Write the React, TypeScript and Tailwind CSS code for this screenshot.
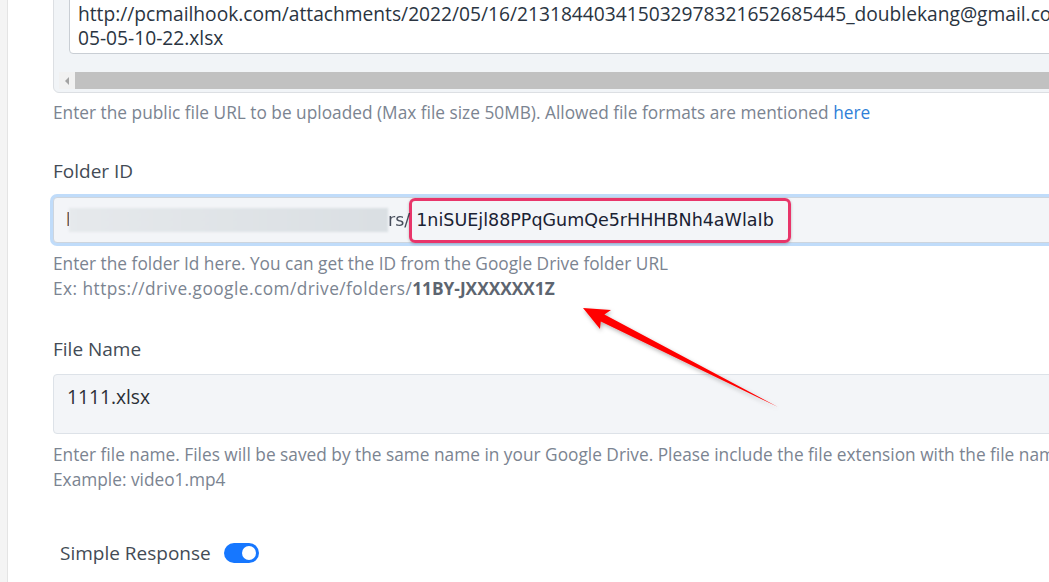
import { Fragment } from 'react';

const sans = "font-['Open_Sans',sans-serif]";
const mono = "font-['DejaVu_Sans',sans-serif] text-[17.5px] text-[#1a2233]";

function Help({ children }: { children: React.ReactNode }) {
  return <div className={`${sans} text-[17.3px] leading-[25px] text-[#7b8491]`}>{children}</div>;
}

function Label({ children }: { children: React.ReactNode }) {
  return <div className={`${sans} text-[19px] leading-6 text-[#434b55]`}>{children}</div>;
}

// red pointer drawn on top of the form
function Arrow() {
  return (
    <svg className="pointer-events-none absolute inset-0" width="1049" height="582" viewBox="0 0 1049 582">
      <defs>
        <filter id="arrowShadow" x="-10%" y="-10%" width="120%" height="120%">
          <feDropShadow dx="1" dy="2" stdDeviation="2" floodColor="#000" floodOpacity="0.3" />
        </filter>
      </defs>
      <polygon
        points="583,308 611,310 604.4,314.4 778,407 600.8,321.6 600,329"
        fill="#ff0000"
        filter="url(#arrowShadow)"
      />
    </svg>
  );
}

export default function App() {
  return (
    <div className="relative flex h-[582px] w-[1049px] overflow-hidden bg-white">
      <div className="w-[8px] shrink-0 border-r border-[#e4e4e4] bg-[#f4f4f4]" />

      <div className="min-w-0 flex-1 pl-[45px]">
        <div className="w-[1100px]">
          {/* file url textarea with horizontal scroll */}
          <div className="mt-[-22px] rounded-md border border-[#dcdfe3] bg-[#f1f4f7] px-[15px] pb-[3px] pt-[15px]">
            <div className="h-[60px] rounded-[4px] border border-[#c9ced4] bg-white pl-[8px] pt-[7px]">
              <div className={`${sans} whitespace-nowrap text-[19.2px] leading-6 text-[#2a3441]`}>
                http://pcmailhook.com/attachments/2022/05/16/213184403415032978321652685445_doublekang@gmail.com_2022-
                <br />
                05-05-10-22.xlsx
              </div>
            </div>
            <div className="-ml-[10px] mt-[18px] flex h-[17px] bg-[#f1f1f1]">
              <div className="flex w-[16px] items-center justify-center">
                <div className="h-0 w-0 border-y-[4px] border-r-[4px] border-y-transparent border-r-[#a3a3a3]" />
              </div>
              <div className="flex-1 bg-[#c1c1c1]" />
            </div>
          </div>

          <div className="mt-[7px]">
            <Help>
              Enter the public file URL to be uploaded (Max file size 50MB). Allowed file formats are mentioned{' '}
              <span className="text-[#2f7fd8]">here</span>
            </Help>
          </div>

          {/* folder id */}
          <div className="mt-[34px]">
            <Label>Folder ID</Label>
          </div>
          <div className="mt-[14px] flex h-[46px] items-center rounded-[4px] border border-[#cdd5de] bg-[#f3f5f8] pl-[12px] shadow-[0_0_0_3px_#c0dcfa]">
            <span className={`inline-block w-[3px] overflow-hidden ${mono}`}>h</span>
            <span className="h-[24px] w-[319px] bg-gradient-to-r from-[#e6e9ec] to-[#dadfe3] blur-[1px]" />
            <span className={`${mono} opacity-80`}>rs/</span>
            <span className={`-ml-[1px] flex h-[45px] items-center rounded-[6px] border-[3px] border-[#e8356a] pl-[4px] pr-[14px] shadow-[0_1px_3px_rgba(0,0,0,0.25)] ${mono}`}>
              1niSUEjl88PPqGumQe5rHHHBNh4aWlaIb
            </span>
          </div>
          <div className="mt-[8px]">
            <Help>
              Enter the folder Id here. You can get the ID from the Google Drive folder URL
              <br />
              <span className="tracking-[0.45px]">Ex: https://drive.google.com/drive/folders/</span>
              <span className="font-bold text-[#5d6570]">11BY-JXXXXXX1Z</span>
            </Help>
          </div>

          {/* file name */}
          <div className="mt-[36px]">
            <Label>File Name</Label>
          </div>
          <div className="mt-[13px] h-[60px] rounded-[4px] border border-[#dde2e8] bg-[#f3f5f8] pl-[13px] pt-[10px]">
            <div className={`${sans} text-[19.2px] leading-6 text-[#2b2f36]`}>1111.xlsx</div>
          </div>
          <div className="mt-[8px]">
            <Help>
              {['Enter file name. Files will be saved by the same name in your Google Drive. Please include the file extension with the file name.', 'Example: video1.mp4'].map((line, i) => (
                <Fragment key={i}>
                  {i > 0 && <br />}
                  {line}
                </Fragment>
              ))}
            </Help>
          </div>

          {/* simple response toggle */}
          <div className="ml-[7px] mt-[49px] flex items-center gap-[13px]">
            <Label>Simple Response</Label>
            <div className="flex h-[20px] w-[35px] items-center justify-end rounded-full bg-[#1677ff] pr-[3px]">
              <div className="h-[14px] w-[14px] rounded-full bg-white" />
            </div>
          </div>
        </div>
      </div>

      <Arrow />
    </div>
  );
}
